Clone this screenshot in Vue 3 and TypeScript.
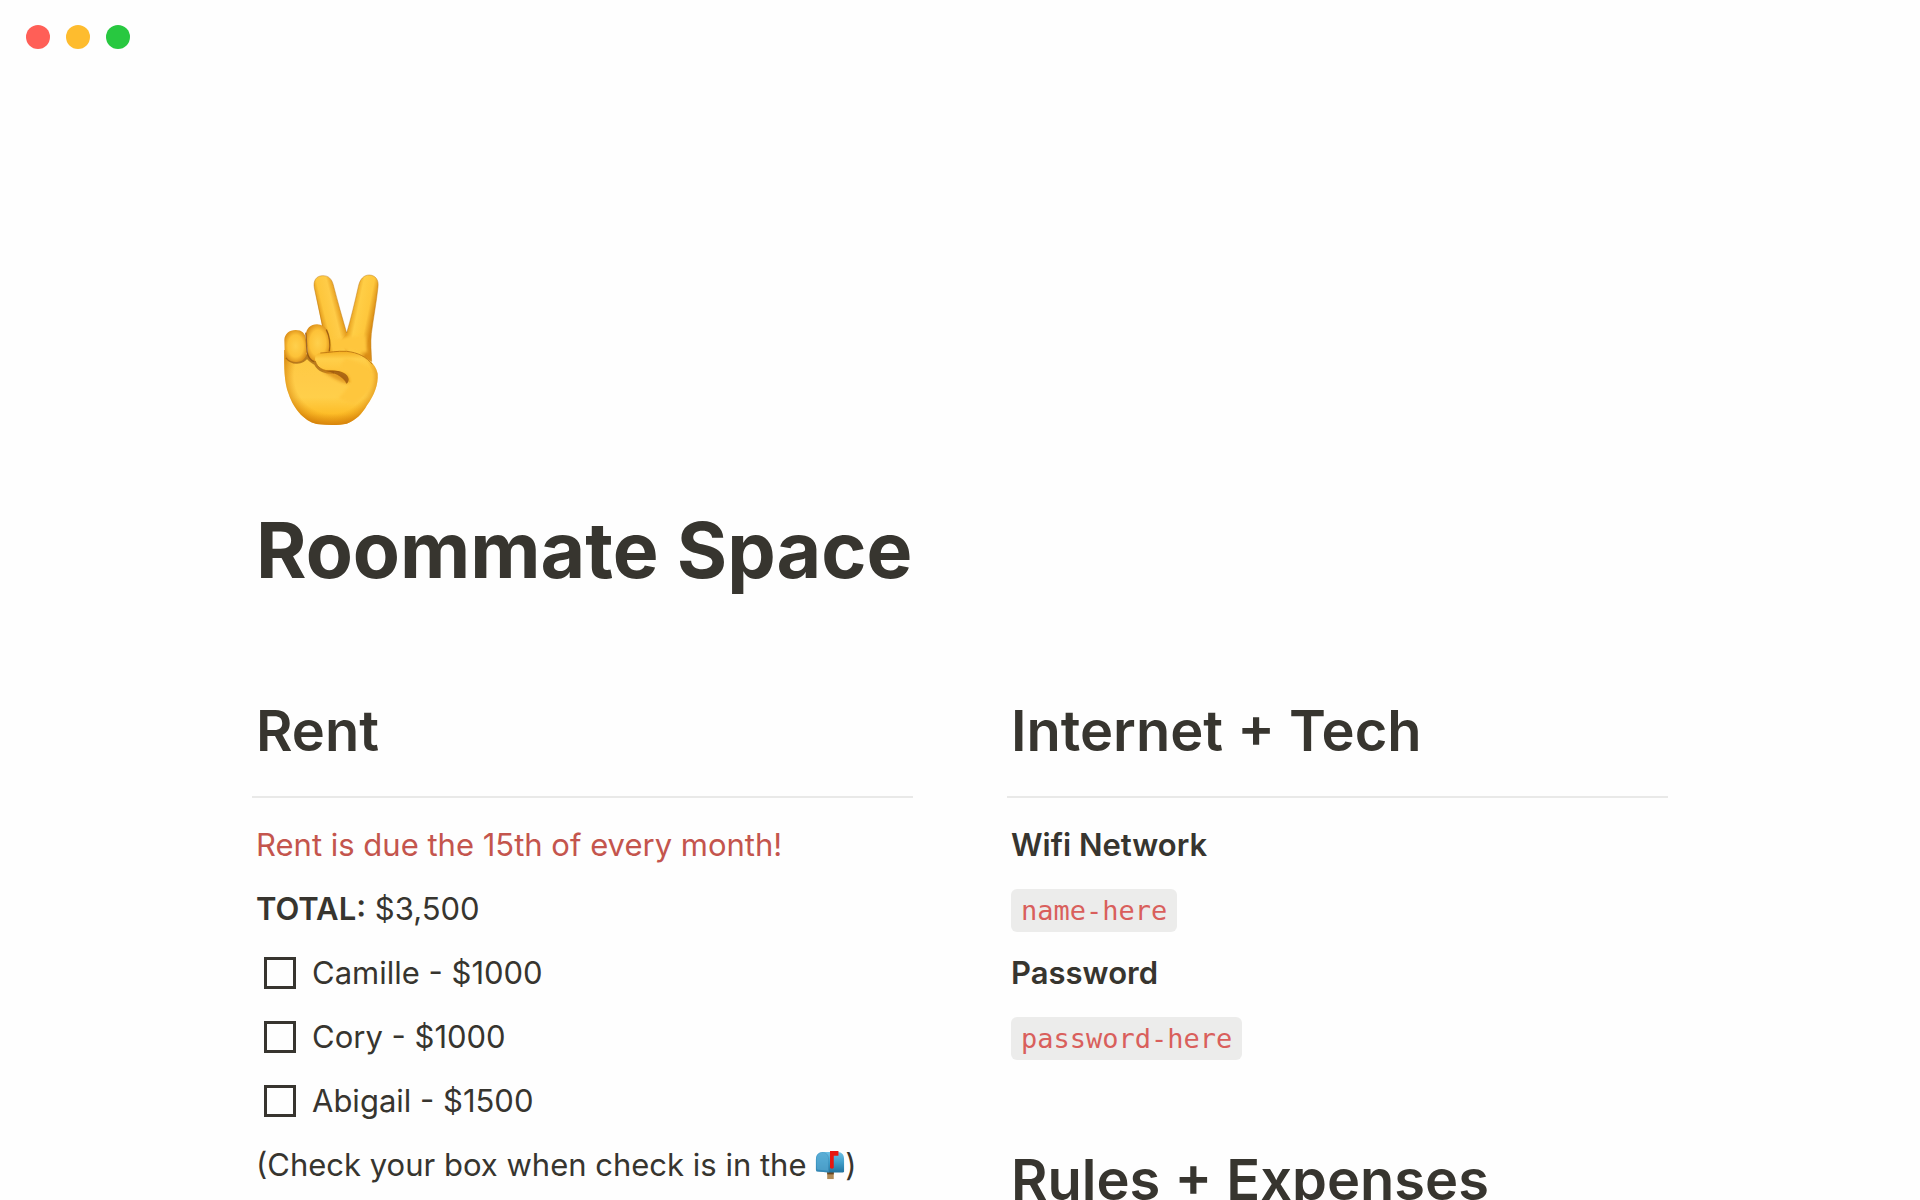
<script setup lang="ts">
import { ref } from 'vue'

interface Share {
  id: string
  name: string
  amount: string
  paid: boolean
}

const windowControls = [
  { label: 'Close', kind: 'close' },
  { label: 'Minimize', kind: 'minimize' },
  { label: 'Zoom', kind: 'zoom' },
]

const shares = ref<Share[]>([
  { id: 'camille', name: 'Camille', amount: '$1000', paid: false },
  { id: 'cory', name: 'Cory', amount: '$1000', paid: false },
  { id: 'abigail', name: 'Abigail', amount: '$1500', paid: false },
])

const credentials = [
  { label: 'Wifi Network', value: 'name-here' },
  { label: 'Password', value: 'password-here' },
]
</script>

<template>
  <div class="window">
    <header class="titlebar">
      <button
        v-for="control in windowControls"
        :key="control.kind"
        type="button"
        class="control"
        :class="control.kind"
        :aria-label="control.label"
      ></button>
    </header>

    <main class="page">
      <svg class="page-icon" viewBox="90 60 306 480" role="img" aria-label="Victory hand">
        <defs>
          <linearGradient id="palm" x1="0" y1="0" x2="0" y2="1">
            <stop offset="0" stop-color="#fdc93c" />
            <stop offset="0.5" stop-color="#ffcb48" />
            <stop offset="0.7" stop-color="#ffcf4a" />
            <stop offset="0.88" stop-color="#fdbd28" />
            <stop offset="1" stop-color="#e99a14" />
          </linearGradient>
          <linearGradient id="indexFinger" gradientUnits="userSpaceOnUse" x1="204" y1="180" x2="268" y2="164">
            <stop offset="0" stop-color="#e09518" />
            <stop offset="0.25" stop-color="#fdc63c" />
            <stop offset="0.7" stop-color="#ffcc48" />
            <stop offset="1" stop-color="#e59a1b" />
          </linearGradient>
          <linearGradient id="middleFinger" gradientUnits="userSpaceOnUse" x1="308" y1="160" x2="376" y2="174">
            <stop offset="0" stop-color="#e79e1c" />
            <stop offset="0.28" stop-color="#ffce46" />
            <stop offset="0.72" stop-color="#fec73c" />
            <stop offset="1" stop-color="#da8d15" />
          </linearGradient>
          <radialGradient id="knuckle" cx="0.5" cy="0.5" r="0.62">
            <stop offset="0" stop-color="#ffd04c" />
            <stop offset="0.55" stop-color="#fdc238" />
            <stop offset="1" stop-color="#cf7c0e" />
          </radialGradient>
          <linearGradient id="thumb" x1="0" y1="0" x2="0" y2="1">
            <stop offset="0" stop-color="#f3ad20" />
            <stop offset="0.25" stop-color="#ffcf4a" />
            <stop offset="0.65" stop-color="#fec43a" />
            <stop offset="1" stop-color="#e2930f" />
          </linearGradient>
          <radialGradient id="edge" gradientUnits="userSpaceOnUse" cx="245" cy="378" r="152">
            <stop offset="0.74" stop-color="#df8c0c" stop-opacity="0" />
            <stop offset="1" stop-color="#cf7a08" stop-opacity="0.8" />
          </radialGradient>
          <filter id="soften" x="-20%" y="-20%" width="140%" height="140%">
            <feGaussianBlur stdDeviation="5" />
          </filter>
          <filter id="crease" x="-20%" y="-20%" width="140%" height="140%">
            <feGaussianBlur stdDeviation="2" />
          </filter>
        </defs>
        <path
          fill="url(#palm)"
          d="M103 300C102 350 102 397 116 432C132 480 168 519 208 523C236 526 268 526 290 521C318 511 336 492 351 466C373 434 385 405 383 371C379 352 368 341 359 330L362 265L290 247L238 262L210 320Z"
        />
        <path
          fill="url(#edge)"
          d="M103 300C102 350 102 397 116 432C132 480 168 519 208 523C236 526 268 526 290 521C318 511 336 492 351 466C373 434 385 405 383 371C379 352 368 341 359 330L330 300H210Z"
        />
        <path
          fill="url(#indexFinger)"
          d="M218 236L193 114C189 91 199 78 217 77C236 76 246 88 250 105C262 154 277 202 290 249L298 310L238 306C240 272 231 239 218 229Z"
        />
        <path
          fill="url(#middleFinger)"
          d="M290 249C302 208 314 159 325 110C330 87 341 75 358 75C377 76 387 90 384 111C379 158 370 205 364 251C361 280 364 307 365 335C342 317 315 307 290 305L270 275Z"
        />
        <path fill="#fec63c" filter="url(#soften)" d="M250 270L287 260L346 258L352 308L290 300L248 301Z" />
        <path
          fill="none"
          stroke="#bd7a14"
          stroke-width="2"
          opacity="0.7"
          d="M218 229L193 114C189 91 199 78 217 77C236 76 246 88 250 105C262 154 277 202 290 249C302 208 314 159 325 110C330 87 341 75 358 75C377 76 387 90 384 111C379 158 370 205 364 251C361 280 364 307 365 335"
        />
        <path
          fill="none"
          stroke="#9c5a0c"
          stroke-width="10"
          opacity="0.7"
          filter="url(#crease)"
          d="M110 322C126 342 156 342 172 318C177 332 190 336 196 340C207 362 225 367 252 367"
        />
        <path
          fill="url(#knuckle)"
          d="M137 240C117 240 104 252 103 270L104 307C106 326 119 336 137 336C157 337 169 325 171 306L168 270C167 250 156 240 137 240Z"
        />
        <path
          fill="url(#knuckle)"
          d="M201 223C182 223 167 236 168 257L173 306C175 324 184 334 200 334C228 335 240 318 239 286C239 247 229 224 201 223Z"
        />
        <path
          fill="none"
          stroke="#8f500b"
          stroke-width="4"
          opacity="0.8"
          filter="url(#crease)"
          d="M167 248C171 272 168 293 173 312C177 327 184 332 193 335M229 239C239 259 242 280 238 304"
        />
        <path
          fill="url(#thumb)"
          d="M212 309C199 310 193 319 196 333C201 353 220 364 246 363C270 362 293 370 297 397C322 404 350 391 367 363C352 326 321 305 281 303C257 302 233 307 212 309Z"
        />
        <path
          fill="#fec63c"
          filter="url(#soften)"
          d="M285 325C318 330 348 346 369 371C372 406 350 445 308 462L265 446L296 408C303 378 290 361 269 350Z"
        />
        <path
          fill="none"
          stroke="#b66e0c"
          stroke-width="3"
          opacity="0.8"
          d="M211 309C241 308 260 302 290 304C323 307 351 322 367 343M196 333C201 353 220 364 246 363C254 363 262 364 270 367"
        />
        <path
          fill="#d98a12"
          opacity="0.7"
          filter="url(#soften)"
          d="M215 362C250 366 296 366 296 400C280 402 250 385 215 362Z"
        />
        <path
          fill="#9c560a"
          opacity="0.8"
          filter="url(#crease)"
          d="M228 363C262 358 294 366 296 388C296 394 294 399 289 401C284 386 264 371 228 363Z"
        />
      </svg>

      <h1 class="title">Roommate Space</h1>

      <div class="columns">
        <section class="column">
          <h2 class="heading">Rent</h2>
          <hr class="rule" />
          <p class="line notice">Rent is due the 15th of every month!</p>
          <p class="line"><strong>TOTAL:</strong> $3,500</p>
          <label v-for="share in shares" :key="share.id" class="line todo" :for="share.id">
            <input :id="share.id" v-model="share.paid" type="checkbox" class="box" />
            <span>{{ share.name }} - {{ share.amount }}</span>
          </label>
          <p class="line">
            (Check your box when check is in the
            <svg class="mailbox" viewBox="0 0 32 32" role="img" aria-label="mailbox">
              <defs>
                <linearGradient id="mailboxBody" x1="0" y1="0" x2="0" y2="1">
                  <stop offset="0" stop-color="#6fc0e4" />
                  <stop offset="0.5" stop-color="#419fca" />
                  <stop offset="1" stop-color="#22739f" />
                </linearGradient>
              </defs>
              <path fill="#b08a56" d="M13 22h7v9h-7z" />
              <path fill="#684723" d="M13 22h7v4h-7z" />
              <path fill="url(#mailboxBody)" d="M1 10C1 5 4 2 8 2H24C29 2 31 5 31 10V23C31 24 30 24 29 24H15L3 23Q1 23 1 21Z" />
              <path fill="#3d93bf" opacity="0.6" d="M1 10C1 5 4 2 8 2S15 5 15 10V24L3 23Q1 23 1 21Z" />
              <path fill="#6bbbe0" d="M2 10C2 6 4 3 8 3S14 6 14 10V22L4 21Q2 21 2 20Z" opacity="0.4" />
              <path fill="#e8170f" d="M16 1h9v5h-5v13q-2 2-4 0z" />
            </svg>)
          </p>
        </section>

        <section class="column">
          <h2 class="heading">Internet + Tech</h2>
          <hr class="rule" />
          <template v-for="item in credentials" :key="item.label">
            <p class="line"><strong>{{ item.label }}</strong></p>
            <p class="line"><code class="code">{{ item.value }}</code></p>
          </template>
          <h2 class="heading next">Rules + Expenses</h2>
          <hr class="rule" />
        </section>
      </div>
    </main>
  </div>
</template>

<style>
body {
  margin: 0;
  background: #fefefe;
}
</style>

<style scoped>
.window {
  height: 100vh;
  overflow: hidden;
  background: #fefefe;
  color: #37352f;
  font-family: Inter, 'Liberation Sans', sans-serif;
  font-size: 31px;
}

.titlebar {
  display: flex;
  gap: 16px;
  padding: 25px 26px;
}

.control {
  width: 24px;
  height: 24px;
  padding: 0;
  border: 0;
  border-radius: 50%;
}

.close {
  background: #ff5f57;
}

.minimize {
  background: #febc2e;
}

.zoom {
  background: #28c840;
}

.page {
  padding: 196px 252px 0;
}

.page-icon {
  display: block;
  width: 102px;
  height: 160px;
  margin-left: 28px;
}

.title {
  margin: 72px 0 0;
  padding: 0 4px;
  font-size: 77px;
  font-weight: 700;
  line-height: 96px;
}

.columns {
  display: flex;
  gap: 94px;
  margin-top: 94px;
}

.column {
  flex: 1;
  min-width: 0;
}

.heading {
  margin: 0;
  padding: 0 4px;
  font-size: 56px;
  font-weight: 600;
  line-height: 78px;
}

.next {
  margin-top: 72px;
}

.rule {
  height: 2px;
  margin: 26px 0 15px;
  border: 0;
  background: #e9e9e8;
}

.line {
  display: block;
  margin: 0;
  padding: 0 4px;
  line-height: 64px;
  white-space: nowrap;
}

.line strong {
  font-weight: 600;
}

.notice {
  color: #c4554d;
}

.todo {
  display: flex;
  align-items: center;
  gap: 16px;
  padding-left: 12px;
}

.box {
  appearance: none;
  box-sizing: border-box;
  width: 32px;
  height: 32px;
  margin: 0;
  border: 3px solid #37352f;
}

.box:checked {
  background: #2eaadc;
}

.mailbox {
  width: 30px;
  height: 30px;
  vertical-align: -4px;
}

.code {
  padding: 6px 10px;
  border-radius: 6px;
  background: #ececeb;
  color: #d95f5c;
  font-family: 'DejaVu Sans Mono', monospace;
  font-size: 27px;
  line-height: 1;
}
</style>
